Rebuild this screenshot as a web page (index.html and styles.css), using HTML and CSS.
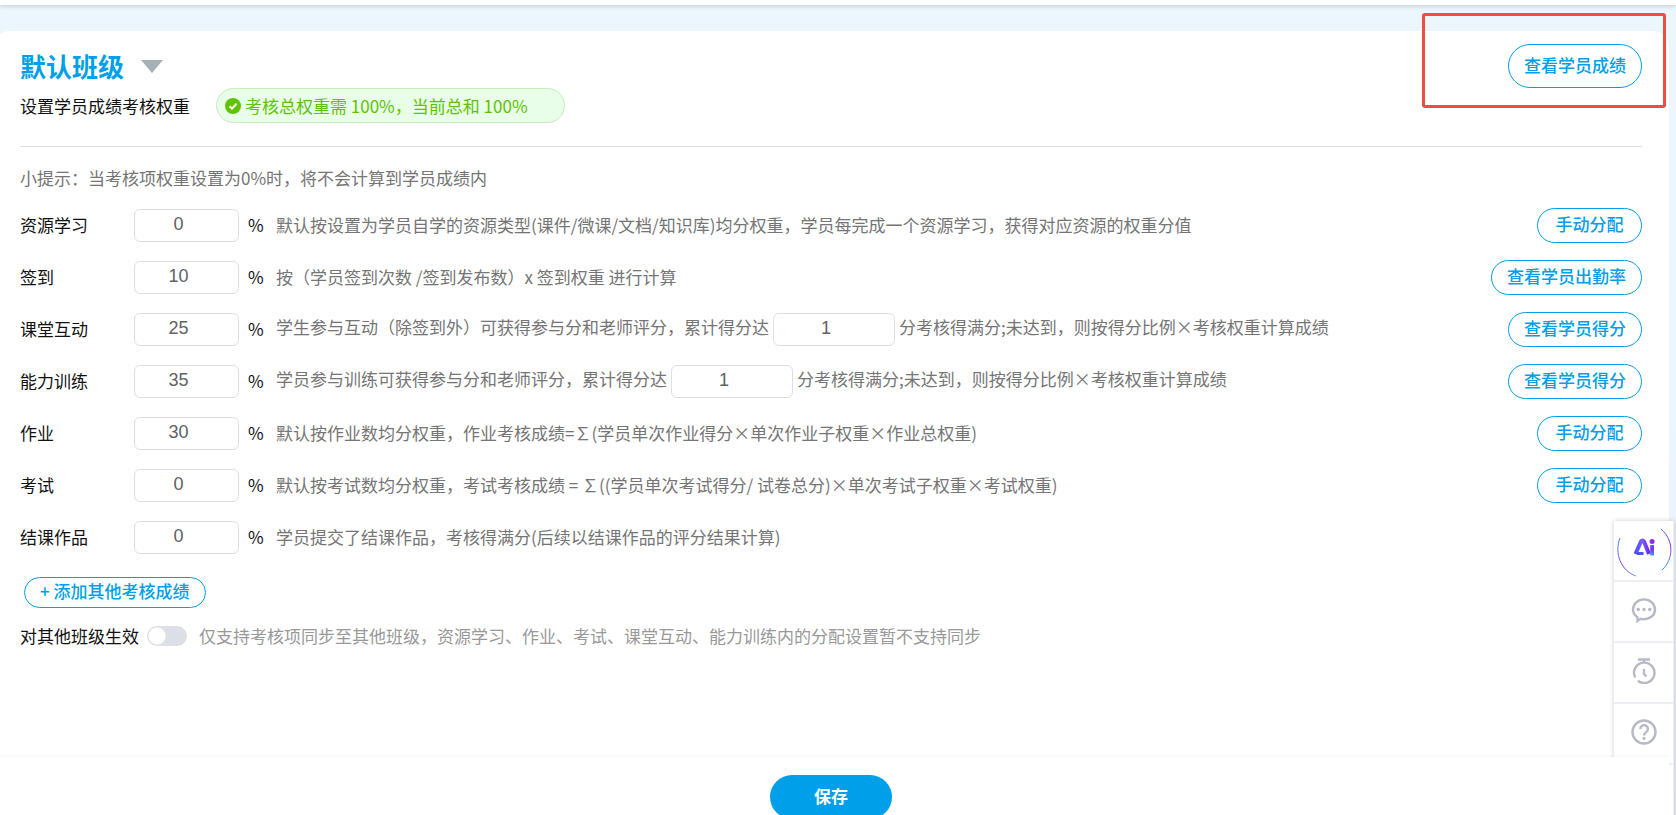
FILE: index.html
```html
<!DOCTYPE html>
<html lang="zh-CN">
<head>
<meta charset="utf-8">
<title>考核权重设置</title>
<link rel="stylesheet" href="styles.css">
</head>
<body>
<div class="page">
  <div class="topbar"></div>
  <main class="card">
    <header class="head">
      <div class="head-left">
        <button class="class-picker" type="button">默认班级
          <svg class="caret" viewBox="0 0 22 13" aria-hidden="true"><path d="M0 0h22L11 13z"/></svg>
        </button>
        <div class="sub">
          <span>设置学员成绩考核权重</span>
          <span class="badge">
            <svg class="badge-icon" viewBox="0 0 16 16" aria-hidden="true"><circle cx="8" cy="8" r="8"/><path d="M4.6 8.2 7 10.6l4.5-4.8"/></svg>
            考核总权重需 100%，当前总和 100%
          </span>
        </div>
      </div>
      <button class="pill pill-tall" type="button">查看学员成绩</button>
    </header>

    <p class="hint">小提示：当考核项权重设置为0%时，将不会计算到学员成绩内</p>

    <form class="rows">
      <div class="row">
        <label class="name" for="w1">资源学习</label>
        <input class="num" id="w1" type="text" value="0"><span class="pct">%</span>
        <p class="desc">默认按设置为学员自学的资源类型(课件/微课/文档/知识库)均分权重，学员每完成一个资源学习，获得对应资源的权重分值</p>
        <button class="pill" type="button">手动分配</button>
      </div>
      <div class="row">
        <label class="name" for="w2">签到</label>
        <input class="num" id="w2" type="text" value="10"><span class="pct">%</span>
        <p class="desc">按（学员签到次数 /签到发布数）x 签到权重 进行计算</p>
        <button class="pill" type="button">查看学员出勤率</button>
      </div>
      <div class="row">
        <label class="name" for="w3">课堂互动</label>
        <input class="num" id="w3" type="text" value="25"><span class="pct">%</span>
        <div class="desc desc-input"><label for="s3">学生参与互动（除签到外）可获得参与分和老师评分，累计得分达</label><input class="num num-wide" id="s3" type="text" value="1"><span>分考核得满分;未达到，则按得分比例×考核权重计算成绩</span></div>
        <button class="pill" type="button">查看学员得分</button>
      </div>
      <div class="row">
        <label class="name" for="w4">能力训练</label>
        <input class="num" id="w4" type="text" value="35"><span class="pct">%</span>
        <div class="desc desc-input"><label for="s4">学员参与训练可获得参与分和老师评分，累计得分达</label><input class="num num-wide" id="s4" type="text" value="1"><span>分考核得满分;未达到，则按得分比例×考核权重计算成绩</span></div>
        <button class="pill" type="button">查看学员得分</button>
      </div>
      <div class="row">
        <label class="name" for="w5">作业</label>
        <input class="num" id="w5" type="text" value="30"><span class="pct">%</span>
        <p class="desc">默认按作业数均分权重，作业考核成绩=∑(学员单次作业得分×单次作业子权重×作业总权重)</p>
        <button class="pill" type="button">手动分配</button>
      </div>
      <div class="row">
        <label class="name" for="w6">考试</label>
        <input class="num" id="w6" type="text" value="0"><span class="pct">%</span>
        <p class="desc">默认按考试数均分权重，考试考核成绩 = ∑((学员单次考试得分/ 试卷总分)×单次考试子权重×考试权重)</p>
        <button class="pill" type="button">手动分配</button>
      </div>
      <div class="row">
        <label class="name" for="w7">结课作品</label>
        <input class="num" id="w7" type="text" value="0"><span class="pct">%</span>
        <p class="desc">学员提交了结课作品，考核得满分(后续以结课作品的评分结果计算)</p>
      </div>
    </form>

    <button class="pill pill-add" type="button">+ 添加其他考核成绩</button>

    <div class="sync">
      <label for="sync">对其他班级生效</label>
      <input class="switch" id="sync" type="checkbox" role="switch">
      <span class="sync-note">仅支持考核项同步至其他班级，资源学习、作业、考试、课堂互动、能力训练内的分配设置暂不支持同步</span>
    </div>
  </main>
  <footer class="footer"><button class="save" type="button">保存</button></footer>
</div>

<nav class="dock">
  <button class="dock-item" type="button" aria-label="AI 助手">
    <svg class="ai" viewBox="0 0 58 58" fill="none">
      <defs>
        <linearGradient id="ga" x1="0" y1="0" x2="1" y2="1"><stop offset="0" stop-color="#3f8cff"/><stop offset=".5" stop-color="#8a2be8"/><stop offset="1" stop-color="#5b9bff"/></linearGradient>
        <linearGradient id="gb" x1="0" y1="0" x2="0" y2="1"><stop offset="0" stop-color="#6a5cff"/><stop offset=".4" stop-color="#8a2be8"/><stop offset="1" stop-color="#2fa8e8"/></linearGradient>
        <linearGradient id="gc" x1="0" y1="0" x2="1" y2="0"><stop offset="0" stop-color="#4a52f5"/><stop offset=".5" stop-color="#7a5cff"/><stop offset="1" stop-color="#6a2cf5"/></linearGradient>
      </defs>
      <path d="M5 18C-1 33 6 51 21 56" stroke="url(#ga)"/>
      <path d="M46 9c13 11 13 30 1 41" stroke="url(#gb)"/>
      <path d="M20.500 34 26 21.500q1.500-2 3 0L34 34" stroke="url(#gc)" stroke-width="4" stroke-linejoin="round"/>
      <path d="M22 33.500h6.500" stroke="#4a52f5" stroke-width="3"/>
      <path d="M35.200 25h3.800v10.500h-3.800z" fill="url(#gb)"/>
      <circle cx="37.100" cy="21.500" r="2.500" fill="#8a2be8"/>
    </svg>
  </button>
  <button class="dock-item" type="button" aria-label="消息">
    <svg class="icon" viewBox="0 0 26 26"><path d="M6.500 20.200C3.600 18.300 2 15.600 2 12.500 2 6.900 6.900 2.400 13 2.400s11 4.500 11 10.100-4.900 9.700-11 9.700c-1.200 0-2.300-.1-3.300-.4L6.500 24z"/><g class="dots"><circle cx="7.300" cy="12.500" r="1.700"/><circle cx="13" cy="12.500" r="1.700"/><circle cx="18.700" cy="12.500" r="1.700"/></g></svg>
  </button>
  <button class="dock-item" type="button" aria-label="计时">
    <svg class="icon" viewBox="0 0 26 26"><path d="M7 1.500h12M13 2v3.500M4.200 19.500A10.200 10.200 0 1 1 6.800 22.700M13 11v5l2.500 2.500"/></svg>
  </button>
  <button class="dock-item" type="button" aria-label="帮助">
    <svg class="icon" viewBox="0 0 26 26"><circle cx="13" cy="13" r="11.500"/><path d="M9.300 10a3.800 3.800 0 1 1 5.800 3.200c-1.400.9-2.100 1.500-2.100 3.300"/><g class="dots"><circle cx="13" cy="19.300" r="1.600"/></g></svg>
  </button>
  <div class="dock-item"></div>
</nav>
<div class="marker"></div>
</body>
</html>
```
FILE: styles.css
```css
* { box-sizing: border-box; }
body {
  margin: 0;
  overflow: hidden;
  font: 17px/24px "Noto Sans CJK SC", sans-serif;
  color: #111;
}
p { margin: 0; }
button, input { font: inherit; }
button { cursor: pointer; white-space: nowrap; }

.page {
  display: flex;
  flex-direction: column;
  height: 100vh;
  background: linear-gradient(#ecf7fd, #edf5fe 50%, #e9edf4);
}
.topbar {
  flex: none;
  height: 5px;
  margin-bottom: 26px;
  background: #fff;
  box-shadow: 0 1px 5px rgba(0, 30, 50, .2);
}
.card {
  flex: 1;
  min-height: 0;
  margin: 0 7px 0 -7px;
  padding: 13px 27px 0;
  border-radius: 16px 16px 0 0;
  background: #fff;
}

.head {
  display: flex;
  justify-content: space-between;
  align-items: flex-start;
  padding-bottom: 23px;
  border-bottom: 1px solid #ddd;
}
.class-picker {
  display: flex;
  align-items: center;
  gap: 17px;
  height: 44px;
  padding: 0;
  border: 0;
  background: none;
  color: #009fe9;
  font-size: 26px;
  font-weight: 700;
}
.caret { width: 22px; height: 13px; fill: #a7b1b4; }
.sub { display: flex; align-items: center; gap: 26px; }
.badge {
  display: flex;
  align-items: center;
  gap: 4px;
  height: 35px;
  padding: 0 36px 0 8px;
  border: 1px solid #c6efb9;
  border-radius: 18px;
  background: #e8fee9;
  color: #61c200;
}
.badge-icon { width: 16px; height: 16px; fill: #61c200; }
.badge-icon path { fill: none; stroke: #fff; stroke-width: 2; }

.pill {
  flex: none;
  min-width: 105px;
  height: 35px;
  padding: 0 15px 3px;
  border: 1px solid #009fe9;
  border-radius: 22px;
  background: #fff;
  color: #009fe9;
  font-weight: 500;
}
.pill-tall { height: 44px; }
.pill-add { display: block; height: 31px; margin: 14px 0 0 4px; }

.hint { margin: 19px 0 9px; color: #757575; }

.row { display: flex; align-items: center; height: 52px; }
.name { width: 114px; }
.num {
  width: 105px;
  height: 33px;
  padding: 0 16px 1px 0;
  border: 1px solid #dcdde6;
  border-radius: 6px;
  background: #fff;
  color: #606266;
  font-family: "Liberation Sans", sans-serif;
  font-size: 18px;
  text-align: center;
}
.num-wide { width: 122px; }
.pct { width: 37px; padding-left: 9px; }
.desc { flex: 1; color: #757575; white-space: nowrap; }
.desc-input { display: flex; align-items: center; gap: 4px; }
.desc-input label, .desc-input span { padding-bottom: 4px; }

.sync { display: flex; align-items: center; margin-top: 16px; }
.switch {
  appearance: none;
  width: 40px;
  height: 20px;
  margin: 0 12px 0 8px;
  border-radius: 10px;
  background: radial-gradient(circle at 10px 10px, #fff 8px, #dcdfe6 9px);
}
.sync-note { color: #999; }

.footer {
  position: relative;
  z-index: 2;
  flex: none;
  height: 58px;
  margin: 0 7px 0 -7px;
  padding-top: 18px;
  background: #fff;
  box-shadow: 0 -1px 2px rgba(0, 0, 0, .04);
  text-align: center;
}
.save {
  width: 122px;
  height: 44px;
  padding: 0 0 3px;
  border: 0;
  border-radius: 22px;
  background: #009fe9;
  color: #fff;
  font-weight: 700;
}

.dock {
  position: fixed;
  z-index: 1;
  right: 2px;
  bottom: -9px;
  display: flex;
  flex-direction: column;
  gap: 2px;
  padding-right: 1px;
  background: #eeeff5;
  box-shadow: 0 0 5px rgba(0, 0, 30, .2);
}
.dock-item {
  display: flex;
  align-items: center;
  justify-content: center;
  width: 59px;
  height: 59px;
  padding: 0 0 3px;
  border: 0;
  background: #fff;
}
.ai { width: 58px; height: 58px; }
.icon { width: 26px; height: 26px; fill: none; stroke: #b7bac5; stroke-width: 2.4; }
.dots { fill: #b7bac5; stroke: none; }

.marker {
  position: absolute;
  top: 13px;
  right: 10px;
  width: 244px;
  height: 95px;
  border: 3px solid #f14c41;
  border-radius: 3px;
  pointer-events: none;
}
```
